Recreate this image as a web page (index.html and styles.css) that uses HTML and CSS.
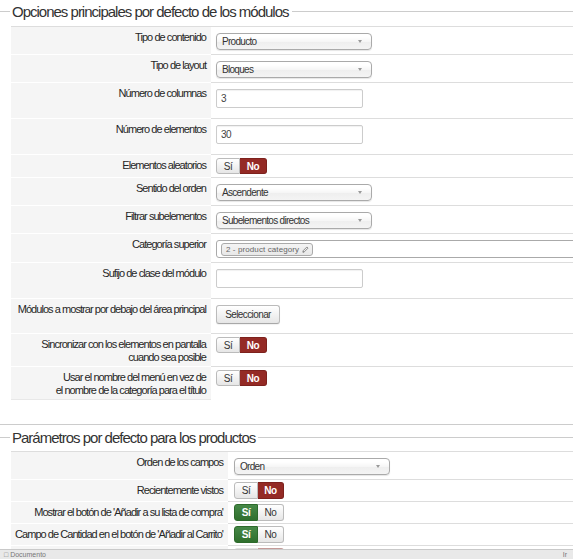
FILE: index.html
```html
<!DOCTYPE html>
<html lang="es">
<head>
<meta charset="utf-8">
<title>Opciones del módulo</title>
<link rel="stylesheet" href="styles.css">
</head>
<body>

<section class="group">
  <h2 class="legend"><span class="legend-text">Opciones principales por defecto de los módulos</span></h2>
  <div class="table t1">
    <div class="row">
      <div class="lbl">Tipo de contenido</div>
      <div class="ctl"><div class="select"><span>Producto</span><b class="caret"></b></div></div>
    </div>
    <div class="row">
      <div class="lbl">Tipo de layout</div>
      <div class="ctl"><div class="select"><span>Bloques</span><b class="caret"></b></div></div>
    </div>
    <div class="row">
      <div class="lbl">Número de columnas</div>
      <div class="ctl ctl-input"><input class="text" type="text" value="3"></div>
    </div>
    <div class="row">
      <div class="lbl">Número de elementos</div>
      <div class="ctl ctl-input"><input class="text" type="text" value="30"></div>
    </div>
    <div class="row">
      <div class="lbl">Elementos aleatorios</div>
      <div class="ctl ctl-toggle"><div class="toggle"><span class="opt">Sí</span><span class="opt no on">No</span></div></div>
    </div>
    <div class="row">
      <div class="lbl">Sentido del orden</div>
      <div class="ctl"><div class="select"><span>Ascendente</span><b class="caret"></b></div></div>
    </div>
    <div class="row">
      <div class="lbl">Filtrar subelementos</div>
      <div class="ctl"><div class="select"><span>Subelementos directos</span><b class="caret"></b></div></div>
    </div>
    <div class="row">
      <div class="lbl">Categoría superior</div>
      <div class="ctl">
        <div class="multi">
          <span class="chip">2 - product category
            <svg class="pencil" viewBox="0 0 8 8" width="7" height="7" aria-hidden="true"><path d="M1 7 L1.4 5.3 L5.6 1.1 L6.9 2.4 L2.7 6.6 Z M1 7 L2.4 6.7" fill="none" stroke="#777" stroke-width="0.9"/></svg>
          </span>
        </div>
      </div>
    </div>
    <div class="row">
      <div class="lbl">Sufijo de clase del módulo</div>
      <div class="ctl ctl-input"><input class="text" type="text" value=""></div>
    </div>
    <div class="row">
      <div class="lbl">Módulos a mostrar por debajo del área principal</div>
      <div class="ctl ctl-btn"><button class="btn" type="button">Seleccionar</button></div>
    </div>
    <div class="row">
      <div class="lbl">Sincronizar con los elementos en pantalla<br>cuando sea posible</div>
      <div class="ctl ctl-toggle"><div class="toggle"><span class="opt">Sí</span><span class="opt no on">No</span></div></div>
    </div>
    <div class="row last">
      <div class="lbl">Usar el nombre del menú en vez de<br>el nombre de la categoría para el título</div>
      <div class="ctl ctl-toggle"><div class="toggle"><span class="opt">Sí</span><span class="opt no on">No</span></div></div>
    </div>
  </div>
</section>

<section class="group group-next">
  <h2 class="legend"><span class="legend-text">Parámetros por defecto para los productos</span></h2>
  <div class="table t2">
    <div class="row">
      <div class="lbl">Orden de los campos</div>
      <div class="ctl"><div class="select"><span>Orden</span><b class="caret"></b></div></div>
    </div>
    <div class="row">
      <div class="lbl">Recientemente vistos</div>
      <div class="ctl ctl-toggle"><div class="toggle"><span class="opt">Sí</span><span class="opt no on">No</span></div></div>
    </div>
    <div class="row">
      <div class="lbl">Mostrar el botón de 'Añadir a su lista de compra'</div>
      <div class="ctl ctl-toggle"><div class="toggle"><span class="opt yes on">Sí</span><span class="opt">No</span></div></div>
    </div>
    <div class="row">
      <div class="lbl">Campo de Cantidad en el botón de 'Añadir al Carrito'</div>
      <div class="ctl ctl-toggle"><div class="toggle"><span class="opt yes on">Sí</span><span class="opt">No</span></div></div>
    </div>
    <div class="row">
      <div class="lbl"></div>
      <div class="ctl ctl-toggle"><div class="toggle faded"><span class="opt"></span><span class="opt no on"></span></div></div>
    </div>
  </div>
</section>

<footer class="statusbar">
  <span class="status-left">&#9633; Documento</span>
  <span class="status-right">Ir</span>
</footer>

</body>
</html>
```

FILE: styles.css
```css
html, body {
  margin: 0;
  padding: 0;
  overflow: hidden;
}

body {
  width: 573px;
  height: 559px;
  background: #fff;
  color: #333;
  font-family: "Liberation Sans", Arial, Helvetica, sans-serif;
  font-size: 11px;
}

/* fieldset-like heading with a rule on both sides */
.legend {
  display: flex;
  align-items: center;
  height: 22px;
  margin: 0 0 4px;
  font-size: 15px;
  font-weight: normal;
  letter-spacing: -1px;
  color: #333;
  white-space: nowrap;
}
.legend::before {
  content: "";
  width: 10px;
  border-top: 1px solid #ccc;
  margin-right: 2px;
}
.legend::after {
  content: "";
  flex: 1;
  border-top: 1px solid #ccc;
  margin-left: 3px;
}

.group-next {
  margin-top: 24px;
  border-top: 1px solid #ccc;
}
.group-next .legend {
  margin-top: 1px;
  margin-bottom: 3px;
}

/* option table: label column + control column */
.table {
  margin-left: 11px;
  border-top: 1px solid #ddd;
}
.row {
  display: grid;
  grid-template-columns: 200px 1fr;
}
.t2 .row {
  grid-template-columns: 217px 1fr;
}

.lbl {
  background: #f5f5f5;
  text-align: right;
  padding: 4px 5px 2px 0;
  line-height: 13px;
  letter-spacing: -0.95px;
  color: #262626;
  border-bottom: 1px solid #fff;
  white-space: nowrap;
}
.row.last .lbl {
  border-bottom-color: #e8e8e8;
}

.ctl {
  padding: 6px 0 4px 5px;
  border-bottom: 1px solid #ddd;
  min-width: 0;
}
.t2 .ctl {
  padding-left: 6px;
}
.row.last .ctl {
  border-bottom: 0;
}
.ctl-input {
  padding-bottom: 10px;
}
.ctl-btn {
  padding-bottom: 9px;
}
.ctl-toggle {
  padding-top: 3px;
  padding-bottom: 3px;
}
.t2 .ctl-toggle {
  padding-top: 2px;
  padding-bottom: 2px;
}

/* dropdown */
.select {
  position: relative;
  box-sizing: border-box;
  width: 156px;
  height: 17px;
  border: 1px solid #aaa;
  border-radius: 4px;
  background: linear-gradient(#fff 20%, #f6f6f6 50%, #eee 52%, #f4f4f4 100%);
  box-shadow: 0 1px 1px rgba(0, 0, 0, 0.1);
  font-size: 10px;
  letter-spacing: -0.7px;
  line-height: 15px;
  padding-left: 5px;
  color: #333;
}
.caret {
  position: absolute;
  right: 9px;
  top: 6px;
  width: 0;
  height: 0;
  border-left: 2.5px solid transparent;
  border-right: 2.5px solid transparent;
  border-top: 3px solid #999;
}

/* text field */
.text {
  display: block;
  box-sizing: border-box;
  width: 147px;
  height: 19px;
  margin: 0;
  padding: 0 4px;
  border: 1px solid #ccc;
  border-radius: 2px;
  box-shadow: inset 0 1px 1px rgba(0, 0, 0, 0.06);
  font-family: inherit;
  font-size: 10px;
  letter-spacing: -0.6px;
  color: #444;
  background: #fff;
}

/* multi-select with tag */
.multi {
  box-sizing: border-box;
  width: 370px;
  height: 18px;
  border: 1px solid #aaa;
  border-radius: 3px;
  padding: 2px 0 0 4px;
  background: #fff;
}
.chip {
  display: inline-flex;
  align-items: center;
  gap: 3px;
  box-sizing: border-box;
  height: 13px;
  padding: 0 3px 0 4px;
  border: 1px solid #aaa;
  border-radius: 3px;
  background: linear-gradient(#f4f4f4, #e8e8e8);
  font-size: 8px;
  letter-spacing: 0.1px;
  color: #666;
  vertical-align: top;
}
.pencil {
  display: block;
}

/* plain button */
.btn {
  display: block;
  box-sizing: border-box;
  width: 64px;
  height: 19px;
  margin: 0;
  padding: 0;
  border: 1px solid #bbb;
  border-bottom-color: #a8a8a8;
  border-radius: 3px;
  background: linear-gradient(#fff, #e6e6e6);
  box-shadow: 0 1px 1px rgba(0, 0, 0, 0.06);
  font-family: inherit;
  font-size: 10px;
  letter-spacing: -0.6px;
  color: #333;
}

/* yes/no switch */
.toggle {
  display: flex;
  height: 16px;
}
.t2 .toggle {
  height: 17px;
}
.opt {
  box-sizing: border-box;
  display: flex;
  align-items: center;
  justify-content: center;
  width: 24px;
  border: 1px solid #bbb;
  background: linear-gradient(#fff, #e6e6e6);
  font-size: 10px;
  letter-spacing: -0.4px;
  color: #333;
}
.opt:first-child {
  border-radius: 3px 0 0 3px;
}
.opt:last-child {
  width: 27px;
  border-left: 0;
  border-radius: 0 3px 3px 0;
}
.t2 .opt:last-child {
  width: 26px;
}
.opt.no.on {
  background: #942a25;
  border-color: #7d211d;
  color: #fff;
  font-weight: bold;
}
.opt.yes.on {
  background: linear-gradient(#468847, #2f6f2d);
  border-color: #2d6a2b;
  color: #fff;
  font-weight: bold;
}
.toggle.faded {
  opacity: 0.45;
}

/* browser status strip along the bottom edge */
.statusbar {
  position: fixed;
  left: 0;
  right: 0;
  bottom: 0;
  height: 9px;
  display: flex;
  justify-content: space-between;
  padding: 0 6px 0 4px;
  background: #e9e9e9;
  border-top: 1px solid #c9c9c9;
  font-size: 7px;
  line-height: 9px;
  color: #777;
  overflow: hidden;
}
```
